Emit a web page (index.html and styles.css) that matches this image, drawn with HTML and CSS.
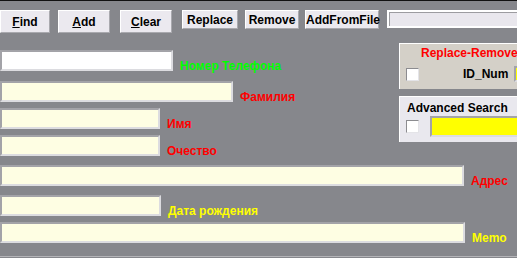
FILE: index.html
```html
<!DOCTYPE html>
<html lang="ru">
<head>
  <meta charset="UTF-8" />
  <title>Телефонная книга</title>
  <link rel="stylesheet" href="styles.css">
</head>
<body>

  <div class="toolbar">
    <button class="btn btn-big btn-find"><u>F</u>ind</button>
    <button class="btn btn-big btn-add"><u>A</u>dd</button>
    <button class="btn btn-big btn-clear"><u>C</u>lear</button>
    <button class="btn btn-small btn-replace">Replace</button>
    <button class="btn btn-small btn-remove">Remove</button>
    <button class="btn btn-small btn-addfile">AddFromFile</button>
    <input class="path" type="text" />
  </div>

  <div class="top">
    <div class="left">
      <div class="row">
        <input class="field field-white w-phone" type="text" />
        <span class="label green">Номер Телефона</span>
      </div>
      <div class="row mt-10">
        <input class="field w-surname" type="text" />
        <span class="label red">Фамилия</span>
      </div>
      <div class="row mt-6">
        <input class="field w-short" type="text" />
        <span class="label red">Имя</span>
      </div>
      <div class="row mt-6">
        <input class="field w-short" type="text" />
        <span class="label red">Очество</span>
      </div>
    </div>

    <div class="side">
      <div class="panel panel-replace">
        <div class="panel-title red">Replace-Remove</div>
        <div class="panel-row">
          <span class="check"></span>
          <span class="id-label">ID_Num</span>
          <input class="field field-yellow field-id" type="text" />
        </div>
      </div>
      <div class="panel panel-search">
        <div class="panel-title">Advanced Search</div>
        <div class="panel-row">
          <span class="check"></span>
          <input class="field field-yellow field-search" type="text" />
        </div>
      </div>
    </div>
  </div>

  <div class="row mt-9">
    <input class="field w-address" type="text" />
    <span class="label red">Адрес</span>
  </div>
  <div class="row mt-9">
    <input class="field w-date" type="text" />
    <span class="label yellow">Дата рождения</span>
  </div>
  <div class="row mt-6">
    <input class="field w-memo" type="text" />
    <span class="label yellow">Memo</span>
  </div>

  <div class="footer"></div>

</body>
</html>
```

FILE: styles.css
```css
* { margin: 0; padding: 0; box-sizing: border-box; }
:root {
  --bg: #86878c;
  --face: #ebe9ef;
  --field: #fefee3;
}
body {
  font-family: "Liberation Sans", Arial, sans-serif;
  font-size: 12px;
  font-weight: bold;
  background: var(--bg);
  border-top: 1px solid #111;
  height: 258px;
  overflow: hidden;
}

/* toolbar */
.toolbar {
  display: flex;
  align-items: flex-start;
  padding-top: 9px;
}
.btn {
  flex: none;
  font: inherit;
  color: #000;
  background: var(--face);
  border: 1px solid;
  border-color: #fff #a9a9ae #a9a9ae #fff;
  padding: 0;
  text-align: center;
}
.btn-big { height: 23px; }
.btn-small { height: 19px; }
.btn-find { width: 50px; }
.btn-add { width: 52px; margin-left: 8px; }
.btn-clear { width: 52px; margin-left: 10px; }
.btn-replace { width: 56px; margin-left: 10px; }
.btn-remove { width: 54px; margin-left: 7px; }
.btn-addfile { width: 74px; margin-left: 6px; }
.path {
  flex: 1;
  min-width: 0;
  height: 18px;
  margin-left: 8px;
  border: 2px solid #fff;
  border-right: none;
  background: #e9e7ed;
  box-shadow: inset 1px 1px #9c9ca0;
}

/* form */
.top {
  display: flex;
  align-items: flex-start;
  margin-top: 10px;
}
.left {
  flex: none;
  width: 399px;
  padding-top: 7px;
}
.row {
  display: flex;
  align-items: flex-end;
}
.mt-6 { margin-top: 6px; }
.mt-9 { margin-top: 9px; }
.mt-10 { margin-top: 10px; }
.field {
  flex: none;
  height: 21px;
  font: inherit;
  border: 2px solid;
  border-color: #a3a3a8 #dcdce0 #dcdce0 #a3a3a8;
  background: var(--field);
  outline: none;
}
.field-white { background: #fff; }
.field-yellow { background: #ffff00; }
.w-phone { width: 173px; }
.w-surname { width: 233px; }
.w-short { width: 160px; }
.w-date { width: 161px; }
.w-address { width: 464px; }
.w-memo { width: 465px; }
.label {
  margin-left: 7px;
  margin-bottom: -2px;
  line-height: 14px;
  white-space: nowrap;
}
.green { color: #00ff00; }
.red { color: #ff0000; }
.yellow { color: #ffff00; }

/* side panels, cut off by the window edge */
.side {
  flex: 1;
  min-width: 0;
  display: flex;
  flex-direction: column;
  gap: 7px;
  overflow: hidden;
}
.panel {
  height: 46px;
  border-top: 1px solid #fff;
  border-left: 1px solid #fff;
  overflow: hidden;
}
.panel-title {
  line-height: 14px;
  white-space: nowrap;
}
.panel-row {
  display: flex;
  align-items: center;
  padding-left: 6px;
}
.panel-replace { background: #d4d0c8; }
.panel-replace .panel-title { padding: 2px 0 0 21px; }
.panel-replace .panel-row { margin-top: 6px; height: 16px; }
.panel-search { background: #e9e8ee; }
.panel-search .panel-title { padding: 4px 0 0 7px; }
.panel-search .panel-row { margin-top: 1px; }
.check {
  flex: none;
  width: 13px;
  height: 13px;
  background: #fff;
  border: 1px solid;
  border-color: #8c8c90 #e4e4e8 #e4e4e8 #8c8c90;
}
.id-label {
  margin-left: 44px;
  line-height: 14px;
}
.field-id {
  flex: 1;
  min-width: 0;
  height: 16px;
  margin-left: 6px;
  border-right: none;
}
.field-search {
  flex: 1;
  min-width: 0;
  margin-left: 11px;
  border-right: none;
}

.footer {
  margin-top: 13px;
  border-top: 1px solid #b4b4b8;
}
```
